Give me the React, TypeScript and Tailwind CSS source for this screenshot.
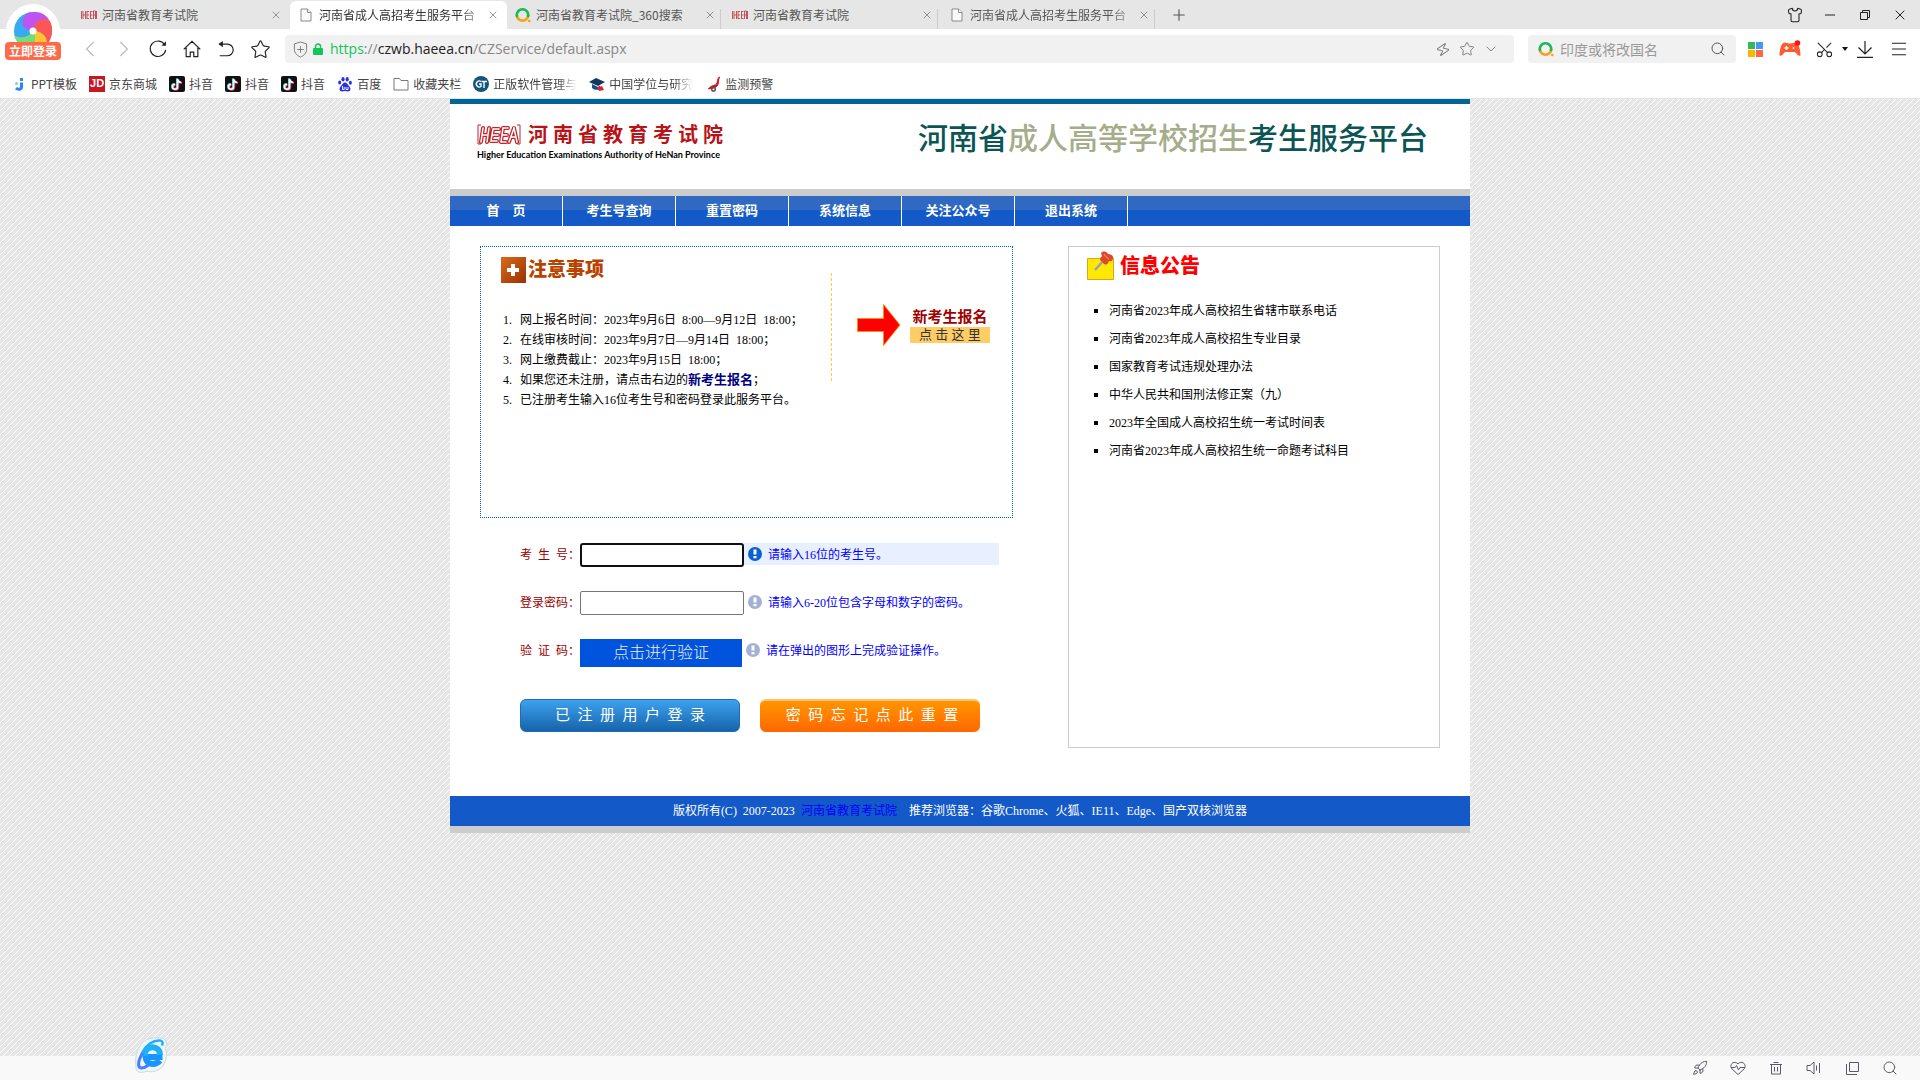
import React from "react";
import {
  X,
  Plus,
  Minus,
  Shirt,
  Search,
  ChevronLeft,
  ChevronRight,
  ChevronDown,
  Star,
  Zap,
  Menu,
  Scissors,
  Rocket,
} from "lucide-react";

const HeeaMark = ({ className }: { className: string }) => (
  <svg viewBox="0 0 44 22" className={className} fill="none" stroke="#c0272d" aria-hidden="true">
    <path d="M4 1H1v19h3M40 1h3v19h-3" strokeWidth="1" />
    <g strokeWidth="4" strokeLinejoin="round" strokeLinecap="round">
      <path d="M6 4 4 18M12 4l-2 14M5 11h6M22 5h-6l-2 12h6M15 11h6M31 4h-5l-2 14h5M25 11h5M32 18l5-14 3 14M34 13h5" />
    </g>
    <g strokeWidth="1.500" stroke="#fff" strokeLinecap="round">
      <path d="M6 4 4 18M12 4l-2 14M5 11h6M22 5h-6l-2 12h6M15 11h6M31 4h-5l-2 14h5M25 11h5M32 18l5-14 3 14M34 13h5" />
    </g>
  </svg>
);

const SmallHeea = () => (
  <svg viewBox="0 0 16 10" className="h-2.5 w-4 shrink-0" fill="none" stroke="#c4525a" strokeWidth="1" aria-hidden="true">
    <path d="M.5 1v8M2 1v8M4.500 1v8M2 5h2M6 1v8M6 1.500h2M6 5h2M6 8.500h2M9.500 1v8M9.500 1.500h2M9.500 5h2M9.500 8.500h2M12.500 9V1h2v8M12.500 5h2M15.500 1v8" />
  </svg>
);

const PageFile = () => (
  <svg viewBox="0 0 16 16" className="h-4 w-4 shrink-0" fill="#fafafa" stroke="#8a8a8a" aria-hidden="true">
    <path d="M3 2h6.500l3.500 3.500V14H3z" />
    <path d="M9.500 2v3.500H13" />
  </svg>
);

const SoRing = () => (
  <svg viewBox="0 0 16 16" className="h-4 w-4 shrink-0" fill="none" strokeWidth="2.600" aria-hidden="true">
    <path d="M1.800 8a5.700 5.700 0 0 0 11.400 0" stroke="#f9a01b" />
    <path d="M2.200 10A5.700 5.700 0 1 1 12.800 10" stroke="#19b955" />
    <circle cx="14.300" cy="14" r="1.300" fill="#f9a01b" />
  </svg>
);

const tabs = [
  { title: "河南省教育考试院", icon: "heea", active: false },
  { title: "河南省成人高招考生服务平台", icon: "file", active: true },
  { title: "河南省教育考试院_360搜索", icon: "so", active: false },
  { title: "河南省教育考试院", icon: "heea", active: false },
  { title: "河南省成人高招考生服务平台", icon: "file", active: false },
];

const TabIcon = ({ kind }: { kind: string }) => {
  if (kind === "heea") return <SmallHeea />;
  if (kind === "file") return <PageFile />;
  return <SoRing />;
};

const TabBar = () => (
  <div className="flex h-[29px] items-end bg-[#e6e6e6] pl-[73px] pr-3 text-xs text-[#555]">
    {tabs.map((t, i) => (
      <div
        key={i}
        className={
          t.active
            ? "flex h-7 w-[217px] items-center rounded-t-md bg-white pl-2 pr-2 text-[#333]"
            : i > 1
              ? "flex h-7 w-[217px] items-center bg-[linear-gradient(#ccc,#ccc)] bg-[length:1px_20px] bg-[position:213px_8px] bg-no-repeat pl-2 pr-2"
              : "flex h-7 w-[217px] items-center pl-2 pr-2"
        }
      >
        <TabIcon kind={t.icon} />
        <button
          className={
            t.title.length === 13
              ? "ml-[5px] whitespace-nowrap pb-px text-left [mask-image:linear-gradient(90deg,#000_90%,transparent_110%)]"
              : "ml-[5px] whitespace-nowrap pb-px text-left"
          }
        >
          {t.title}
        </button>
        <button aria-label="关闭标签" className="ml-auto pb-px">
          <X className="h-3 w-3 text-[#777]" strokeWidth={1.5} />
        </button>
      </div>
    ))}
    <button aria-label="新建标签" className="ml-3 self-center">
      <Plus className="h-[18px] w-[18px] text-[#555]" strokeWidth={1.5} />
    </button>
    <div className="ml-auto flex items-center gap-[19px] self-center text-[#222]">
      <button aria-label="皮肤">
        <Shirt className="h-4 w-4" strokeWidth={1.6} />
      </button>
      <button aria-label="最小化">
        <Minus className="h-4 w-4" strokeWidth={1.5} />
      </button>
      <button aria-label="还原">
        <svg viewBox="0 0 16 16" className="h-4 w-4" fill="none" stroke="currentColor">
          <path d="M3.500 5.500h7v7h-7zM5.500 5.500v-2h7v7h-2" />
        </svg>
      </button>
      <button aria-label="关闭">
        <X className="h-4 w-4" strokeWidth={1.5} />
      </button>
    </div>
  </div>
);

const Toolbar = () => (
  <div className="flex h-[34px] items-end bg-white pl-[81px]">
    <div className="flex h-7 items-center gap-4 text-[#222]">
      <button aria-label="后退" className="text-[#bbb]">
        <ChevronLeft className="h-[18px] w-[18px] scale-150" strokeWidth={1} />
      </button>
      <button aria-label="前进" className="text-[#bbb]">
        <ChevronRight className="h-[18px] w-[18px] scale-150" strokeWidth={1} />
      </button>
      <button aria-label="刷新">
        <svg viewBox="0 0 20 20" className="h-5 w-[18px]" fill="none" stroke="currentColor" strokeWidth="1.300">
          <path d="M17.500 5.500A8.600 8.600 0 1 0 18.500 11" />
          <path d="M18.800 1.500v5h-5z" fill="currentColor" stroke="none" />
        </svg>
      </button>
      <button aria-label="主页">
        <svg viewBox="0 0 20 20" className="h-5 w-[18px]" fill="none" stroke="currentColor" strokeWidth="1.300">
          <path d="M.8 10.500 10 1.500l9.200 9M3.500 8.500v10H8v-5h4v5h4.500v-10" />
        </svg>
      </button>
      <button aria-label="恢复">
        <svg viewBox="0 0 20 20" className="h-5 w-[18px]" fill="none" stroke="currentColor" strokeWidth="1.300">
          <path d="M3 4.500h8.500a6.500 6.500 0 0 1 0 13H3" />
          <path d="M1.500 4.500 6.500 1v7z" fill="currentColor" stroke="none" />
        </svg>
      </button>
      <button aria-label="收藏">
        <Star className="h-[19px] w-[19px] scale-110" strokeWidth={1.3} />
      </button>
    </div>
    <div className="ml-[15px] flex h-7 flex-1 items-center rounded-sm bg-[#f1f1f1] pl-2 pr-[15px]">
      <svg viewBox="0 0 16 18" className="h-[17px] w-[15px]" fill="none" stroke="#777">
        <path d="M8 1 1.500 3v6c0 4 3 6.500 6.500 8 3.500-1.500 6.500-4 6.500-8V3zM8 5.500v7M4.500 9h7" />
      </svg>
      <svg viewBox="0 0 10 12" className="ml-[5px] h-3 w-[10px]" fill="none">
        <path d="M2.500 5.500V3.500a2.500 2.500 0 0 1 5 0v2" stroke="#11c45c" strokeWidth="1.500" />
        <rect y="5" width="10" height="7" rx="1" fill="#11c45c" />
      </svg>
      <button aria-label="地址" className="ml-[7px] font-['Open_Sans',sans-serif] text-sm text-[#888]">
        <span className="text-[#11c45c]">https</span>://<span className="text-[#222]">czwb.haeea.cn</span>/CZService/default.aspx
      </button>
      <div className="ml-auto flex items-center gap-2 text-[#777]">
        <Zap className="h-[15px] w-4 rotate-12" strokeWidth={1.5} />
        <Star className="h-4 w-4" strokeWidth={1.4} />
        <ChevronDown className="h-4 w-4" strokeWidth={1.3} />
      </div>
    </div>
    <div className="ml-[14px] flex h-7 w-[208px] items-center rounded-sm bg-[#f1f1f1] pl-[10px] pr-[10px]">
      <SoRing />
      <input
        aria-label="搜索"
        placeholder="印度或将改国名"
        className="ml-1.5 w-36 bg-transparent text-sm outline-none placeholder:text-[#999]"
      />
      <Search className="ml-auto h-4 w-4 text-[#555]" strokeWidth={1.5} />
    </div>
    <div className="flex h-7 items-center pl-3 pr-3 text-[#222]">
      <svg viewBox="0 0 15 15" className="h-[15px] w-[15px]">
        <path fill="#36b85e" d="M0 0h7v7H0z" />
        <path fill="#3f9cf8" d="M8 0h7v7H8z" />
        <path fill="#ffb400" d="M0 8h7v7H0z" />
        <path fill="#ff6740" d="M8 8h7v7H8z" />
      </svg>
      <button aria-label="游戏" className="ml-4">
        <svg viewBox="0 0 22 18" className="h-[18px] w-[22px]">
          <path
            d="M5 2.500c2 0 3 1 6 1s4-1 6-1c3 1 4.500 8 4.500 13-3 1-4-2.500-5.500-3.500H6C4.500 13 3.500 16.500.5 15.500.5 10.500 2 3.500 5 2.500z"
            fill="#ff5b33"
          />
          <path d="M7.500 6v4M5.500 8h4M14.500 7v2" stroke="#fff" strokeWidth="1.400" />
          <circle cx="18.500" cy="3" r="2.800" fill="#f01818" />
        </svg>
      </button>
      <button aria-label="截图" className="ml-[14px] flex items-center gap-2">
        <Scissors className="h-[19px] w-[19px] -rotate-90" strokeWidth={1.3} />
        <svg viewBox="0 0 6 4" className="h-1 w-1.5">
          <path d="M0 0h6L3 4z" fill="#111" />
        </svg>
      </button>
      <button aria-label="下载" className="ml-[9px]">
        <svg viewBox="0 0 16 18" className="h-[18px] w-4" fill="none" stroke="currentColor" strokeWidth="1.200">
          <path d="M8 1v13M1.500 7.500 8 14l6.500-6.500M0 17.400h16" />
        </svg>
      </button>
      <button aria-label="菜单" className="ml-[17px]">
        <Menu className="h-[18px] w-[18px] scale-110" strokeWidth={1.3} />
      </button>
    </div>
  </div>
);

const DouyinIcon = () => (
  <svg viewBox="0 0 16 16" className="h-4 w-4" fill="none" strokeWidth="2">
    <rect width="16" height="16" rx="2" fill="#111" />
    <path d="M8 2.500v8a2.500 2.500 0 1 1-2.500-2.500M8 3c.3 2 1.500 3 3.700 3.200" stroke="#25f4ee" />
    <path d="M9.200 3.200v8a2.500 2.500 0 1 1-2.500-2.500M9.200 3.700c.3 2 1.500 3 3.700 3.200" stroke="#fe2c55" />
    <path d="M8.600 2.800v8a2.500 2.500 0 1 1-2.500-2.500M8.600 3.300c.3 2 1.500 3 3.700 3.200" stroke="#fff" strokeWidth="1.500" />
  </svg>
);

const bookmarks: { label: string; fade?: boolean; icon: React.ReactNode }[] = [
  {
    label: "PPT模板",
    icon: (
      <svg viewBox="0 0 16 16" className="h-4 w-4" fill="none">
        <path d="M10.500 6.500V11c0 2.500-3.500 3-5.500 1.200" stroke="#2b87f5" strokeWidth="3" />
        <rect x="9" y="2" width="3" height="3" fill="#2b87f5" />
        <circle cx="5.500" cy="7.500" r="1.500" fill="#8cc0fa" />
      </svg>
    ),
  },
  {
    label: "京东商城",
    icon: (
      <span className="flex h-4 w-4 items-center justify-center bg-[#c91623] font-['Liberation_Sans',sans-serif] text-[11px] font-bold text-white">
        JD
      </span>
    ),
  },
  { label: "抖音", icon: <DouyinIcon /> },
  { label: "抖音", icon: <DouyinIcon /> },
  { label: "抖音", icon: <DouyinIcon /> },
  {
    label: "百度",
    icon: (
      <svg viewBox="0 0 16 16" className="h-4 w-4" fill="#2932e1">
        <ellipse cx="6" cy="3.200" rx="1.600" ry="2.300" />
        <ellipse cx="10.200" cy="3.200" rx="1.600" ry="2.300" />
        <ellipse cx="2.700" cy="6.500" rx="1.500" ry="2" />
        <ellipse cx="13.400" cy="6.800" rx="1.500" ry="2" />
        <path d="M8 6.500c2 0 2.500 2 4 3.500 2.500 2.500 1.500 5.500-1 5.500-1.200 0-2-.4-3-.4s-1.800.4-3 .4c-2.500 0-3.500-3-1-5.500C5.500 8.500 6 6.500 8 6.500z" />
        <path d="M5.500 10v3.500h1.700V11M9 11v2.500h2V11" stroke="#fff" fill="none" strokeWidth=".9" />
      </svg>
    ),
  },
  {
    label: "收藏夹栏",
    icon: (
      <svg viewBox="0 0 16 16" className="h-4 w-4" fill="none" stroke="#777">
        <path d="M1 14V2.500h5.500L8 4.500h7V14z" />
      </svg>
    ),
  },
  {
    label: "正版软件管理与",
    fade: true,
    icon: (
      <svg viewBox="0 0 16 16" className="h-4 w-4" fill="none">
        <circle cx="8" cy="8" r="8" fill="#12567e" />
        <path d="M8 5.500a3 3 0 1 0 0 5V8H6M8.500 5.500H14M11 5.500V12" stroke="#fff" strokeWidth="1.400" />
      </svg>
    ),
  },
  {
    label: "中国学位与研究",
    fade: true,
    icon: (
      <svg viewBox="0 0 16 16" className="h-4 w-4">
        <path d="M0 6 7 2l9 4-7 4z" fill="#15365f" />
        <path d="M3 8v4c2 2 6 2.500 8 1V9.500L9 11z" fill="#1d4b84" />
        <path d="M8 11.500 13 10l2 4-5 1z" fill="#d4242c" />
      </svg>
    ),
  },
  {
    label: "监测预警",
    icon: (
      <svg viewBox="0 0 16 16" className="h-4 w-4" fill="none">
        <path d="M14.500 1C12 2 13 6 11.500 8 9.500 10 6 9 3.500 13c3-1 7-.5 9-3.500 1.500-2.300.5-5.500 2-8.500z" fill="#d8101c" stroke="#d8101c" />
        <circle cx="8.500" cy="13.200" r="1.800" stroke="#555" strokeWidth="1.500" />
      </svg>
    ),
  },
];

const BookmarkBar = () => (
  <nav className="flex h-[35px] items-center gap-3 bg-white pl-[11px] pt-[6px] text-xs text-[#444]">
    {bookmarks.map((b, i) => (
      <a key={i} href="#" className="flex items-center gap-1">
        {b.icon}
        <span
          className={
            b.fade
              ? "whitespace-nowrap [mask-image:linear-gradient(90deg,#000_78%,transparent)]"
              : "whitespace-nowrap"
          }
        >
          {b.label}
        </span>
      </a>
    ))}
  </nav>
);

const LoginBadge = () => (
  <button className="absolute left-[5px] top-1 flex w-14 flex-col items-center">
    <span className="flex h-[54px] w-[54px] items-center justify-center rounded-full bg-white">
      <svg viewBox="0 0 40 40" className="h-10 w-10">
        <circle cx="20" cy="20" r="19" fill="#39a9f4" />
        <path d="M20 20C8 19 6 8 15 2c10-3 18 1 21 7-6-3-14 2-16 11z" fill="#c054f2" />
        <path d="M20 20c1-11 12-15 17-10 4 8 2 18-3 24 0-8-6-14-14-14z" fill="#fb5757" />
        <path d="M20 20c11 0 16 8 13 15-5 4-11 5-17 3 6-4 8-11 4-18z" fill="#ffc531" />
        <path d="M20 20c5 8 1 16-5 18C8 36 3 31 1 24c6 4 14 3 19-4z" fill="#74dc7a" />
        <circle cx="20" cy="20" r="3.500" fill="#fff" />
      </svg>
    </span>
    <span className="-mt-4 flex h-[18px] w-14 items-center justify-center rounded-sm bg-[#ff6b4a] text-xs font-bold text-white">
      立即登录
    </span>
  </button>
);

const navItems = ["首\u3000页", "考生号查询", "重置密码", "系统信息", "关注公众号", "退出系统"];

const news = [
  "河南省2023年成人高校招生省辖市联系电话",
  "河南省2023年成人高校招生专业目录",
  "国家教育考试违规处理办法",
  "中华人民共和国刑法修正案（九）",
  "2023年全国成人高校招生统一考试时间表",
  "河南省2023年成人高校招生统一命题考试科目",
];

const notices: React.ReactNode[] = [
  <>网上报名时间：2023年9月6日&nbsp; 8:00—9月12日&nbsp; 18:00；</>,
  <>在线审核时间：2023年9月7日—9月14日&nbsp; 18:00；</>,
  <>网上缴费截止：2023年9月15日&nbsp; 18:00；</>,
  <>
    如果您还未注册，请点击右边的
    <a href="#" className="text-[13px] font-bold text-[#000080]">
      新考生报名
    </a>
    ；
  </>,
  <>已注册考生输入16位考生号和密码登录此服务平台。</>,
];

const Hint = ({ on, children }: { on?: boolean; children: React.ReactNode }) => (
  <span
    className={
      on
        ? "flex h-[22px] w-[255px] items-center gap-1.5 bg-[#e8f0ff] pl-1 text-[#00f]"
        : "flex h-[22px] items-center gap-1.5 pl-1 text-[#00f]"
    }
  >
    <svg viewBox="0 0 14 14" className={on ? "h-3.5 w-3.5" : "h-3.5 w-3.5 opacity-40"}>
      <circle cx="7" cy="7" r="7" fill={on ? "#0a62d0" : "#1f3f98"} />
      <path d="M5.500 2.500h3v5h-3zM5.500 9h3v2.300h-3z" fill="#fff" />
    </svg>
    <span className="pt-0.5">{children}</span>
  </span>
);

const NoticePanel = () => (
  <section className="flex h-[272px] border border-dotted border-[#069]">
    <div className="w-[350px] pl-5 pt-2.5">
      <h2 className="flex items-center gap-0.5 text-[19px] font-black leading-[26px] text-[#b84300]">
        <svg viewBox="0 0 25 26" className="h-[26px] w-[25px]">
          <defs>
            <linearGradient id="plus" x1="0" y1="0" x2="1" y2="1">
              <stop offset="0" stopColor="#dc6a1c" />
              <stop offset="1" stopColor="#9a3200" />
            </linearGradient>
          </defs>
          <path d="M0 0h25v26H0z" fill="url(#plus)" />
          <path d="M10 7h4v4h4v4h-4v4h-4v-4H6v-4h4z" fill="#fff" />
        </svg>
        注意事项
      </h2>
      <ol className="mt-[27px] leading-5">
        {notices.map((n, i) => (
          <li key={i} className="flex pl-0.5">
            <span className="w-[17px]">{i + 1}.</span>
            <span className="whitespace-nowrap">{n}</span>
          </li>
        ))}
      </ol>
    </div>
    <div className="mt-[26px] h-[108px] w-px bg-[repeating-linear-gradient(180deg,#fc3_0_3px,transparent_3px_5px)]" />
    <a href="#" className="ml-[25px] mt-14 flex h-[44px] items-center gap-[9px]">
      <svg viewBox="0 0 44 44" className="h-11 w-11" fill="#f00" stroke="#ff8c1a">
        <path d="M.5 15.500h26V1.500L43 22 26.500 42.500V28.500H.5z" />
      </svg>
      <span className="flex w-20 flex-col items-center">
        <span className="text-[15px] font-bold leading-5 text-[#a00000]">新考生报名</span>
        <span className="w-full bg-[#fc6] text-center text-[13px] leading-4 text-[#333]">点 击 这 里</span>
      </span>
    </a>
  </section>
);

const LoginForm = () => (
  <form className="mt-[25px] pl-10 text-[#900]" onSubmit={(e) => e.preventDefault()}>
    <div className="flex flex-col gap-6">
      <div className="flex h-6 items-start">
        <label htmlFor="sid" className="w-[60px] leading-6">
          考&nbsp; 生&nbsp; 号：
        </label>
        <input id="sid" className="h-6 w-[164px] rounded-[3px] border-2 border-[#101010] bg-white px-1 outline-none" />
        <Hint on>请输入16位的考生号。</Hint>
      </div>
      <div className="flex h-6 items-start">
        <label htmlFor="pwd" className="w-[60px] leading-6">
          登录密码：
        </label>
        <input id="pwd" type="password" className="h-6 w-[164px] rounded-[2px] border border-[#767676] bg-white px-1 outline-none" />
        <Hint>请输入6-20位包含字母和数字的密码。</Hint>
      </div>
      <div className="flex h-7 items-start">
        <label htmlFor="captcha" className="w-[60px] leading-6">
          验&nbsp; 证&nbsp; 码：
        </label>
        <button id="captcha" type="button" className="h-7 w-[162px] bg-[#0053dd] text-base font-light leading-7 text-[#eee]">
          点击进行验证
        </button>
        <Hint>请在弹出的图形上完成验证操作。</Hint>
      </div>
    </div>
    <div className="mt-8 flex gap-5 text-[15px] text-white">
      <button className="h-[33px] w-[220px] rounded-md border border-[#1c6db5] bg-linear-to-b from-[#3ea2ee] to-[#1664ab]">
        已&nbsp; 注&nbsp; 册&nbsp; 用&nbsp; 户&nbsp; 登&nbsp; 录
      </button>
      <button type="button" className="h-[33px] w-[220px] rounded-md border-t-2 border-[#ffc06a] bg-linear-to-b from-[#ff9500] to-[#ff6600] pb-0.5 pl-1">
        密&nbsp; 码&nbsp; 忘&nbsp; 记&nbsp; 点&nbsp; 此&nbsp; 重&nbsp; 置
      </button>
    </div>
  </form>
);

const NewsPanel = () => (
  <section className="h-[502px] w-[372px] border border-[#ccc] pl-[18px] pt-1">
    <h2 className="flex items-center gap-1.5 text-[20px] font-black leading-[30px] text-[#f00]">
      <svg viewBox="0 0 27 30" className="h-[30px] w-[27px]">
        <path d="M.5 7.500h26v21H.5z" fill="#ffe900" stroke="#d9a520" />
        <path d="M8 19 17 9" stroke="#9aa0b4" strokeWidth="2.500" />
        <path d="M14 2c3-3 6-1 7 1 3 0 6 2 5 5-1 3-3 2-4 2-1 3-3 5-6 2-1-2-3-2-3-4s2-2 2-3-1-2-1-3z" fill="#e0482a" />
        <path d="M17 3c1 2 3 4 5 5" stroke="#ff9a7a" fill="none" />
      </svg>
      信息公告
    </h2>
    <ul className="mt-4 leading-7">
      {news.map((n) => (
        <li key={n} className="flex items-center gap-[11px] pl-[7px]">
          <span className="h-1 w-1 bg-black" />
          <a href="#">{n}</a>
        </li>
      ))}
    </ul>
  </section>
);

const statusIcon = "h-4 w-4";

const StatusBar = () => (
  <footer className="flex h-6 items-center justify-end gap-[22px] bg-[#f9f9f9] pr-[22px] text-[#5a5a66]">
    <Rocket className={statusIcon} strokeWidth={1.5} />
    <svg viewBox="0 0 16 16" className={statusIcon} fill="none" stroke="currentColor">
      <path d="M8 14.500 2 9C-1.500 5 4-.5 8 4c4-4.500 9.500 1 6 5zM1 7.500h4l1.500-2 2 4.500L10 7.500h5" />
    </svg>
    <svg viewBox="0 0 16 16" className={statusIcon} fill="none" stroke="currentColor">
      <path d="M2 4.500h12M5.500 2.500h5M3.500 4.500v9.500h9V4.500M6.500 7v4.500M9.500 7v4.500" />
    </svg>
    <svg viewBox="0 0 16 16" className={statusIcon} fill="none" stroke="currentColor">
      <path d="M1 5.500h3l4-3.500v12l-4-3.500H1zM10.500 5.500v5M13.500 3v10" />
    </svg>
    <svg viewBox="0 0 16 16" className={statusIcon} fill="none" stroke="currentColor">
      <path d="M5.500 2.500h9v9h-9zM2.500 4v10.500H13" />
    </svg>
    <Search className={statusIcon} strokeWidth={1.5} />
  </footer>
);

const BrowserE = () => (
  <svg viewBox="0 0 34 40" className="absolute bottom-1 left-[134px] h-10 w-[34px]">
    <path d="M8 7C14 1 20 2 26 2c7 0 8 6 5 10 3 6 1 13-2 18-4 5-12 7-16 5-7 3-12 1-11-5-1-8 0-15 6-23z" fill="#eef7fa" stroke="#c9d8de" />
    <g fill="none">
      <path d="M28.500 21H11.500c1 8.500 10 8.500 14.500 3.500" stroke="#1a94ff" strokeWidth="6" />
      <path d="M10.500 20c0-11.500 15.500-11.500 15.500-1" stroke="#1fb0fb" strokeWidth="6" />
      <path d="M8 17C12 9 19 4 26 4.500c3 .5 3 2.500 2 5" stroke="#1fb0fb" strokeWidth="2.500" />
      <path d="M8.500 17C4 25 3 31.500 7.500 32c2 0 4.500-1 7-3" stroke="#4a7dff" strokeWidth="3" />
    </g>
  </svg>
);

export default function App() {
  return (
    <div className="relative flex min-h-screen flex-col font-['Noto_Sans_CJK_SC',sans-serif]">
      <header>
        <TabBar />
        <Toolbar />
        <BookmarkBar />
      </header>
      <LoginBadge />
      <main className="flex-1 border-t border-[#e4e4e4] bg-[#e6e6e6] bg-[linear-gradient(135deg,#e6e6e6_0_42%,#fff_42%_58%,#e6e6e6_58%)] bg-[length:6px_6px] font-['Liberation_Serif','Noto_Sans_CJK_SC',serif] text-xs text-black">
        <div className="mx-auto w-full max-w-[1020px] bg-white">
          <div className="flex h-[97px] items-start justify-between border-b-[7px] border-t-[5px] border-b-[#ccc] border-t-[#069] pl-[27px] pr-[42px] pt-[18px]">
            <div>
              <div className="flex items-center gap-[7px] pt-px text-[20px] font-bold leading-[24px] text-[#b81318]">
                <HeeaMark className="h-[22px] w-[44px]" />
                河 南 省 教 育 考 试 院
              </div>
              <p className="pt-0.5 font-['Lato',sans-serif] text-[9px] font-bold leading-3 text-black">
                Higher Education Examinations Authority of HeNan Province
              </p>
            </div>
            <h1 className="whitespace-nowrap text-[30px] font-medium leading-[34px] text-[#0b5555]">
              河南省<span className="text-[#a5ad8a]">成人高等学校招生</span>考生服务平台
            </h1>
          </div>
          <nav className="flex h-[30px] bg-linear-to-b from-[#2f69c1] from-47% to-[#1459c8] to-47% text-[13px] font-bold leading-[30px] text-white">
            {navItems.map((n) => (
              <a key={n} href="#" className="w-[113px] border-r border-white text-center">
                {n}
              </a>
            ))}
          </nav>
          <div className="flex justify-between px-[30px] pb-12 pt-5">
            <div className="w-[533px]">
              <NoticePanel />
              <LoginForm />
            </div>
            <NewsPanel />
          </div>
          <div className="border-b-[7px] border-[#ccc] bg-[#1459c8] text-center leading-[30px] text-white">
            版权所有(C)&nbsp; 2007-2023&nbsp;{" "}
            <a href="#" className="text-[#00f]">
              河南省教育考试院
            </a>
            {"\u3000"}推荐浏览器：谷歌Chrome、火狐、IE11、Edge、国产双核浏览器
          </div>
        </div>
      </main>
      <StatusBar />
      <BrowserE />
    </div>
  );
}
